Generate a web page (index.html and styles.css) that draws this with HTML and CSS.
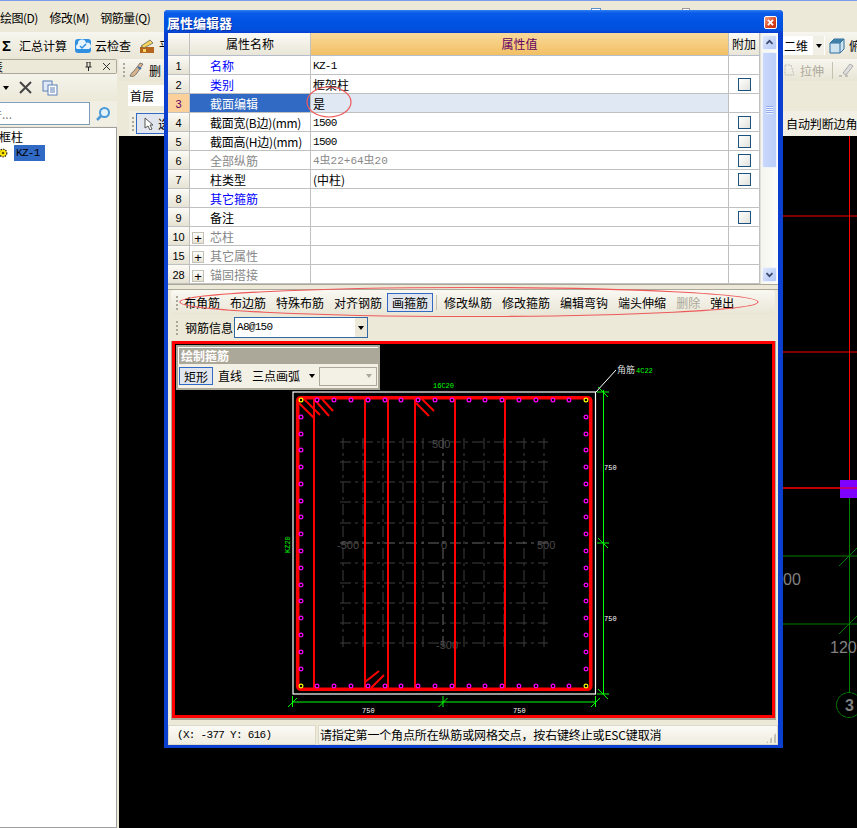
FILE: index.html
```html
<!DOCTYPE html>
<html lang="zh-CN">
<head>
<meta charset="utf-8">
<title>属性编辑器</title>
<link rel="stylesheet" href="styles.css">
</head>
<body>
<div class="app">
  <div class="menubar">
    <span class="menu">绘图(D)</span><span class="menu">修改(M)</span><span class="menu">钢筋量(Q)</span>
    <span class="peek p1"></span><span class="peek p2"></span>
  </div>
  <div class="mainbar">
    <div class="tools">
      <span class="sigma">Σ</span><span class="tl">汇总计算</span>
      <svg class="ic16" viewBox="0 0 16 16"><rect x="0" y="1" width="16" height="14" rx="3" fill="#2f8fe0"/><path d="M2 11a3 3 0 0 1 1-5 4 4 0 0 1 8-1 3 3 0 0 1 3 6z" fill="#e8f4fd"/><path d="M5 8l2 2 4-4" fill="none" stroke="#2f8fe0" stroke-width="1.5"/></svg>
      <span class="tl">云检查</span>
      <svg class="ic16" viewBox="0 0 16 16"><rect x="1" y="9" width="14" height="6" fill="#b5651d"/><path d="M2 8l9-6 3 3-9 5z" fill="#f4d35e" stroke="#555" stroke-width=".7"/><rect x="4" y="11" width="3" height="3" fill="#f4d35e"/></svg>
      <span class="tl">平</span>
    </div>
    <div class="tools">
      <span class="dd">二维</span><span class="ddb"><i class="tri"></i></span>
      <svg class="ic16" viewBox="0 0 16 16"><path d="M1 5l4-4h10v10l-4 4H1z" fill="#cfe2ef" stroke="#2f6f9f"/><path d="M1 5h10v10M11 5l4-4" fill="none" stroke="#2f6f9f"/><path d="M1 5l4-4h10l-4 4z" fill="#3f7fa8"/></svg>
      <span class="tl">俯</span>
    </div>
  </div>
  <div class="work">
    <aside class="side">
      <div class="sidehead">
        <span class="clip">表</span>
        <span class="sideicons"><svg class="ic9" viewBox="0 0 9 9"><path d="M3 0v5M6 0v5M1.5 5h6M4.5 5v4M2.5 0h4" stroke="#222" fill="none"/></svg><svg class="ic9" viewBox="0 0 9 9"><path d="M1 1l7 7M8 1L1 8" stroke="#333" fill="none"/></svg></span>
      </div>
      <div class="sidetools">
        <i class="tri"></i>
        <svg class="ic13" viewBox="0 0 13 13"><path d="M1 1l11 11M12 1L1 12" stroke="#444" stroke-width="2" fill="none"/></svg>
        <svg class="ic16" viewBox="0 0 16 16"><rect x="1" y="1" width="9" height="10" fill="#dfe9f7" stroke="#5b7fb5"/><rect x="6" y="5" width="9" height="10" fill="#fff" stroke="#5b7fb5"/><path d="M8 8h5M8 10h5M8 12h5" stroke="#5b7fb5"/></svg>
      </div>
      <div class="searchrow">
        <div class="search"><span class="clip2">件...</span></div>
        <svg class="ic16 sbtn" viewBox="0 0 16 16"><circle cx="9.5" cy="6.5" r="4.5" fill="#e4f2fb" stroke="#4a9ad8" stroke-width="2"/><path d="M6 10l-4 4" stroke="#4a9ad8" stroke-width="2.5"/></svg>
      </div>
      <div class="tree">
        <div class="node"><span class="clip3">框柱</span></div>
        <div class="node">
          <svg class="gear" viewBox="0 0 10 10"><circle cx="5" cy="5" r="3.8" fill="#ffe600" stroke="#222" stroke-width="1.2" stroke-dasharray="1.5 1"/><circle cx="5" cy="5" r="1.3" fill="#6b5b00"/></svg>
          <span class="sel">KZ-1</span>
        </div>
      </div>
    </aside>
    <div class="stage">
      <div class="rowbar bar2">
        <span class="grip"></span>
        <svg class="ic16" viewBox="0 0 16 16"><path d="M1 14c3 1 5 0 7-3l6-9-3-1-6 8c-2 1-3 3-4 5z" fill="#d9b38c" stroke="#555" stroke-width=".7"/><path d="M9 5l3 2" stroke="#3a6fb0" stroke-width="2"/></svg>
        <span class="tl">删</span>
        <span class="push"></span>
        <svg class="ic13" viewBox="0 0 13 13"><path d="M2 1h6l3 10H2z" fill="none" stroke="#bbb" stroke-dasharray="2 1"/></svg>
        <span class="tl off">拉伸</span><span class="vsep"></span>
        <svg class="ic16" viewBox="0 0 16 16"><path d="M4 11l7-9 3 2-7 9z" fill="#ddd" stroke="#aaa"/><path d="M0 14h3M6 14h3" stroke="#999"/></svg>
      </div>
      <div class="rowbar bar3"><span class="floor">首层</span></div>
      <div class="rowbar bar4">
        <span class="grip"></span>
        <span class="selbtn"><svg class="ic13" viewBox="0 0 13 13"><path d="M3 1v10l3-2 2 4 2-1-2-4h3z" fill="#fff" stroke="#555"/></svg><span class="tl">选</span></span>
        <span class="push"></span>
        <span class="auto">自动判断边角</span>
      </div>
      <svg class="cad" viewBox="119 136 738 692" width="738" height="692">
        <g fill="none">
          <path d="M783 216H857M783 352H857M783 488H857M849.5 136V488" stroke="#f00"/>
          <rect x="840" y="480" width="17" height="18" fill="#7f00ff"/>
          <path d="M783 488H857" stroke="#f00"/>
          <path d="M783 556H857M783 624H857M849.5 498V692M839 566l20-20M839 634l20-20" stroke="#007f00"/>
          <circle cx="849" cy="705" r="12.5" stroke="#007f00" stroke-dasharray="5 .6"/>
        </g>
        <text class="big" x="783" y="585">00</text>
        <text class="big" x="830" y="653">1200</text>
        <text class="big b3" x="845" y="711">3</text>
      </svg>
    </div>
  </div>

  <section class="dialog">
    <header class="dtitle"><span>属性编辑器</span>
      <span class="close"><svg viewBox="0 0 13 13"><path d="M3.5 3.5l6 6M9.5 3.5l-6 6" stroke="#fff" stroke-width="2.2" fill="none"/></svg></span>
    </header>
    <div class="gridwrap">
      <div class="grid">
        <div class="row head"><div class="rn"></div><div class="nm ctr">属性名称</div><div class="val hv">属性值</div><div class="add">附加</div></div>
        <div class="row"><div class="rn">1</div><div class="nm blue">名称</div><div class="val num">KZ-1</div><div class="add"></div></div>
        <div class="row"><div class="rn">2</div><div class="nm blue">类别</div><div class="val">框架柱</div><div class="add"><i class="chk"></i></div></div>
        <div class="row cur"><div class="rn">3</div><div class="nm">截面编辑</div><div class="val">是</div><div class="add"></div></div>
        <div class="row"><div class="rn">4</div><div class="nm nml">截面宽(B边)(mm)</div><div class="val num">1500</div><div class="add"><i class="chk"></i></div></div>
        <div class="row"><div class="rn">5</div><div class="nm nml">截面高(H边)(mm)</div><div class="val num">1500</div><div class="add"><i class="chk"></i></div></div>
        <div class="row"><div class="rn">6</div><div class="nm gray">全部纵筋</div><div class="val num gray">4虫22+64虫20</div><div class="add"><i class="chk"></i></div></div>
        <div class="row"><div class="rn">7</div><div class="nm">柱类型</div><div class="val">(中柱)</div><div class="add"><i class="chk"></i></div></div>
        <div class="row"><div class="rn">8</div><div class="nm blue">其它箍筋</div><div class="val"></div><div class="add"></div></div>
        <div class="row"><div class="rn">9</div><div class="nm">备注</div><div class="val"></div><div class="add"><i class="chk"></i></div></div>
        <div class="row"><div class="rn">10</div><div class="nm gray"><i class="plus">+</i>芯柱</div><div class="val"></div><div class="add"></div></div>
        <div class="row"><div class="rn">15</div><div class="nm gray"><i class="plus">+</i>其它属性</div><div class="val"></div><div class="add"></div></div>
        <div class="row"><div class="rn">28</div><div class="nm gray"><i class="plus">+</i>锚固搭接</div><div class="val"></div><div class="add"></div></div>
      </div>
      <div class="scroll">
        <span class="sb"><svg viewBox="0 0 15 15"><path d="M4 9l3.5-3.5L11 9" fill="none" stroke="#3a4a70" stroke-width="2"/></svg></span>
        <span class="thumb"><i></i></span>
        <span class="sb sbd"><svg viewBox="0 0 15 15"><path d="M4 6l3.5 3.5L11 6" fill="none" stroke="#3a4a70" stroke-width="2"/></svg></span>
      </div>
    </div>
    <div class="split"></div>
    <div class="lower">
      <div class="tbar t1">
        <span class="grip"></span>
        <span class="it">布角筋</span><span class="it">布边筋</span><span class="it">特殊布筋</span><span class="it">对齐钢筋</span><span class="it on">画箍筋</span><span class="vsep"></span><span class="it">修改纵筋</span><span class="it">修改箍筋</span><span class="it">编辑弯钩</span><span class="it">端头伸缩</span><span class="it off">删除</span><span class="it">弹出</span>
      </div>
      <div class="tbar t2">
        <span class="grip"></span>
        <span class="lbl">钢筋信息</span>
        <span class="combo"><span class="cv">A8@150</span><span class="cb"><i class="tri"></i></span></span>
      </div>
      <div class="draw">
        <svg class="plan" viewBox="175 344 597 371" width="597" height="371">
          <path class="gridl" d="M340 442H548M340 462H548M340 482H548M340 502H548M340 523H548M340 563H548M340 583H548M340 603H548M340 623H548M340 643H548M343 438V647M363 438V647M383 438V647M403 438V647M423 438V647M464 438V647M484 438V647M504 438V647M524 438V647M544 438V647"/>
          <path class="gridc" d="M340 543H548M443 438V647"/>
          <text class="gt" x="432" y="448">500</text>
          <text class="gt" x="441" y="549">0</text>
          <text class="gt" x="537" y="549">500</text>
          <text class="gt" x="337" y="549">-500</text>
          <text class="gt" x="436" y="649">-500</text>

          <rect x="293" y="392" width="302.5" height="302" fill="none" stroke="#fff" stroke-width="1.2"/>
          <path class="rebar2" d="M314 398V690M365 398V690M388 398V690M415 398V690M455 398V690M505 398V690"/>
          <path class="rebar2" d="M299 403L314 418M304 399L320 415M314 399L329 416M322 399L333 411M416 403L429 416M422 399L434 411M365 682L379 671M371 688L384 675"/>
          <rect x="297.7" y="397.7" width="293" height="291.6" rx="3" fill="none" stroke="#f00" stroke-width="3.6"/>

          <g class="dots">
            <circle cx="317" cy="400"/><circle cx="334" cy="400"/><circle cx="351" cy="400"/><circle cx="368" cy="400"/><circle cx="385" cy="400"/><circle cx="401" cy="400"/><circle cx="418" cy="400"/><circle cx="435" cy="400"/><circle cx="452" cy="400"/><circle cx="469" cy="400"/><circle cx="485" cy="400"/><circle cx="502" cy="400"/><circle cx="519" cy="400"/><circle cx="536" cy="400"/><circle cx="553" cy="400"/><circle cx="569" cy="400"/>
            <circle cx="317" cy="686"/><circle cx="334" cy="686"/><circle cx="351" cy="686"/><circle cx="368" cy="686"/><circle cx="385" cy="686"/><circle cx="401" cy="686"/><circle cx="418" cy="686"/><circle cx="435" cy="686"/><circle cx="452" cy="686"/><circle cx="469" cy="686"/><circle cx="485" cy="686"/><circle cx="502" cy="686"/><circle cx="519" cy="686"/><circle cx="536" cy="686"/><circle cx="553" cy="686"/><circle cx="569" cy="686"/>
            <circle cx="301" cy="417"/><circle cx="301" cy="434"/><circle cx="301" cy="450"/><circle cx="301" cy="467"/><circle cx="301" cy="484"/><circle cx="301" cy="501"/><circle cx="301" cy="517"/><circle cx="301" cy="534"/><circle cx="301" cy="551"/><circle cx="301" cy="568"/><circle cx="301" cy="585"/><circle cx="301" cy="601"/><circle cx="301" cy="618"/><circle cx="301" cy="635"/><circle cx="301" cy="652"/><circle cx="301" cy="669"/>
            <circle cx="586" cy="417"/><circle cx="586" cy="434"/><circle cx="586" cy="450"/><circle cx="586" cy="467"/><circle cx="586" cy="484"/><circle cx="586" cy="501"/><circle cx="586" cy="517"/><circle cx="586" cy="534"/><circle cx="586" cy="551"/><circle cx="586" cy="568"/><circle cx="586" cy="585"/><circle cx="586" cy="601"/><circle cx="586" cy="618"/><circle cx="586" cy="635"/><circle cx="586" cy="652"/><circle cx="586" cy="669"/>
          </g>
          <g class="dots yel"><circle cx="301" cy="400"/><circle cx="586" cy="400"/><circle cx="301" cy="686"/><circle cx="586" cy="686"/></g>

          <path class="dim" d="M603.5 390V694M597 392H609M597 543H609M597 694H609M292.5 702H595.5M292.5 696V707M443 696V707M595.5 696V707M288 707l9-9M438.5 707l9-9M591 707l9-9M598 538l10 10M598 387l10 10M598 689l10 10"/>
          <path d="M596 392L616 370" stroke="#fff" fill="none"/>
          <text class="wt" x="604" y="470">750</text>
          <text class="wt" x="604" y="621">750</text>
          <text class="wt" x="362" y="713">750</text>
          <text class="wt" x="513" y="713">750</text>
          <text class="gn" x="433" y="388">16C20</text>
          <text class="wt cj" x="617" y="373">角筋</text>
          <text class="gn" x="636" y="373">4C22</text>
          <text class="gn" transform="translate(290 553) rotate(-90)">KZ20</text>
        </svg>
        <div class="palette">
          <div class="ptitle">绘制箍筋</div>
          <div class="pbody">
            <span class="pit on">矩形</span><span class="pit">直线</span><span class="pit">三点画弧</span><i class="tri"></i>
            <span class="pcombo"><i class="tri dis"></i></span>
          </div>
        </div>
      </div>
    </div>
    <footer class="status">
      <div class="s1">(X: -377 Y: 616)</div>
      <div class="s2">请指定第一个角点所在纵筋或网格交点，按右键终止或ESC键取消<span class="resize"></span></div>
    </footer>
  </section>

  <svg class="marks" viewBox="0 0 857 828" width="857" height="828">
    <ellipse cx="329" cy="102" rx="22" ry="15"/>
    <ellipse cx="469" cy="302" rx="289" ry="14.5"/>
  </svg>
</div>
</body>
</html>
```

FILE: styles.css
```css
* { box-sizing: border-box; }
html, body { margin: 0; padding: 0; background: #ece9d8; }
body { width: 857px; height: 828px; overflow: hidden; font: 12px/19px "Noto Sans CJK SC", "Liberation Sans", sans-serif; color: #000; }
i { font-style: normal; }
svg { display: block; flex: none; }

.app { position: relative; width: 857px; height: 828px; overflow: hidden; border-top: 1px solid #7f9ce8; background: #ece9d8; display: flex; flex-direction: column; }

.menubar { height: 31px; display: flex; align-items: center; gap: 11.5px; flex: none; padding-top: 1px; }
.menu { letter-spacing: -.5px; white-space: nowrap; }
.peek { align-self: flex-start; margin-top: 6px; width: 10px; height: 3px; flex: none; border: 1px solid #5b8fd0; border-bottom: 0; background: #fff; }
.p1 { margin-left: 429px; }
.p2 { margin-left: 70px; width: 8px; border-color: #999; }

.mainbar { height: 27px; flex: none; display: flex; justify-content: space-between; background: linear-gradient(#f7f6ef, #e9e6d6); }
.tools { display: flex; align-items: center; gap: 4px; padding-left: 2px; }
.sigma { font-weight: 700; font-size: 15px; font-family: "Liberation Sans", sans-serif; width: 13px; }
.tl { white-space: nowrap; }
.tl + .ic16 { margin-left: 4px; }
.off { color: #aca899; }
.ic16 { width: 16px; height: 16px; }
.ic13 { width: 13px; height: 13px; }
.ic9 { width: 9px; height: 9px; }
.tri { display: inline-block; width: 0; height: 0; flex: none; border: 3.5px solid transparent; border-top: 4px solid #000; border-bottom: 0; }
.tri.dis { border-top-color: #aca899; }
.dd { background: #fff; width: 30px; margin-right: -4px; padding-left: 1px; height: 19px; white-space: nowrap; flex: none; }
.ddb { width: 12px; height: 19px; flex: none; background: #f0efe6; display: flex; align-items: center; justify-content: center; border-right: 1px solid #fff; }
.mainbar .tools:last-child { width: 74px; padding: 0; overflow: hidden; flex: none; }

.work { flex: 1; display: flex; min-height: 0; }

.side { width: 119px; flex: none; display: flex; flex-direction: column; padding-right: 2px; overflow: hidden; }
.sidehead { height: 15px; flex: none; border: 1px solid #aca899; border-left: 0; border-radius: 0 2px 2px 0; display: flex; justify-content: space-between; align-items: center; background: #ece9d8; overflow: hidden; }
.clip { margin-left: -9px; }
.sideicons { display: flex; align-items: center; gap: 9px; padding-right: 5px; }
.sidetools { height: 27px; flex: none; display: flex; align-items: center; gap: 10px; padding-left: 3px; background: linear-gradient(#f5f4ec, #ece9d8); }
.searchrow { height: 25px; flex: none; display: flex; align-items: center; gap: 5px; background: #f1efe3; }
.search { width: 90px; height: 23px; background: #fff; border: 1px solid #7f9db9; border-left: 0; color: #888; overflow: hidden; padding-top: 1px; }
.clip2 { margin-left: -10px; display: inline-block; }
.sbtn { width: 16px; height: 16px; }
.tree { flex: 1; background: #fff; border: 1px solid #a0a0a0; border-left: 0; margin-top: 1px; }
.node { height: 16px; display: flex; align-items: center; line-height: 16px; }
.node:first-child { margin-top: 1px; }
.clip3 { margin-left: -1px; }
.gear { width: 10px; height: 10px; margin-left: -2px; margin-right: 6px; flex: none; }
.sel { background: #316ac5; width: 31px; height: 16px; font: 11px/16px "Liberation Mono", monospace; letter-spacing: -.7px; padding-left: 2px; }

.stage { flex: 1; min-width: 0; display: flex; flex-direction: column; }
.rowbar { display: flex; align-items: center; flex: none; }
.bar2 { height: 22px; gap: 4px; padding: 0 2px 0 4px; background: linear-gradient(#f7f6ef, #e8e5d5); }
.bar3 { height: 28px; margin-top: 2px; padding: 2px 0 0 9px; align-items: flex-start; background: #ece9d8; }
.floor { background: #fff; width: 37px; height: 21px; line-height: 21px; padding-left: 2px; }
.bar4 { height: 25px; margin-left: 10px; padding-left: 3px; background: #f1efe3; }
.grip { width: 2px; height: 14px; margin-right: 2px; flex: none; background: repeating-linear-gradient(#aca899 0 2px, transparent 2px 4px); }
.bar2 .grip { margin-right: 0; }
.selbtn { display: flex; align-items: center; gap: 3px; height: 21px; padding: 0 2px 0 5px; background: #e1e6ee; border: 1px solid #316ac5; }
.push { flex: 1; }
.vsep { width: 1px; height: 17px; background: #c5c2b2; flex: none; margin: 0 2px; }
.bar2 .tl.off { margin-right: 2px; }
.auto { white-space: nowrap; width: 71px; flex: none; letter-spacing: -.1px; }
.cad { background: #000; flex: none; }
.big { font: 16px "Liberation Sans", sans-serif; fill: #808080; }
.b3 { font-weight: 700; }

.dialog { position: absolute; left: 164px; top: 9px; width: 619px; height: 738px; background: #ece9d8; display: flex; flex-direction: column; border: solid #0a3fd0; border-width: 0 5px 3px 4px; border-top-left-radius: 4px; border-top-right-radius: 4px; }
.dtitle { height: 23px; flex: none; margin: 0 -5px 0 -4px; padding: 1px 6px 0 3px; display: flex; align-items: center; justify-content: space-between; background: linear-gradient(#2f80f5 0, #0a5be8 3px, #0054e3 12px, #0250dc 20px, #0a3fd0 100%); border-radius: 4px 4px 0 0; color: #fff; font-weight: 700; font-size: 13px; text-shadow: 1px 1px 0 #0a2f9f; }
.close { width: 13px; height: 13px; background: linear-gradient(135deg, #f2a488, #d9431c 60%, #c2300e); border: 1px solid #fff; border-radius: 2px; display: block; }
.close svg { width: 11px; height: 11px; }

.gridwrap { height: 251px; flex: none; display: flex; background: #fff; }
.grid { width: 592px; flex: none; overflow: hidden; background: #fff; }
.row { display: grid; grid-template-columns: 22px 121px 418px 31px; height: 19px; border-bottom: 1px solid #c0c0c0; line-height: 20px; }
.row > div { border-right: 1px solid #c0c0c0; white-space: nowrap; overflow: hidden; }
.rn { text-align: center; background: linear-gradient(#fbfaf5, #e6e3d4); font: 11px/20px "Liberation Sans", sans-serif; }
.nm { padding-left: 20px; }
.nml { letter-spacing: -.3px; }
.val { padding-left: 2px; }
.num { font: 11px/20px "Liberation Mono", "Noto Sans CJK SC", monospace; letter-spacing: -.7px; }
.num.gray { letter-spacing: 0; }
.blue { color: #00f; }
.gray { color: #888; }
.add { display: flex; align-items: center; justify-content: center; }
.chk { width: 13px; height: 13px; border: 1px solid #1c5180; background: linear-gradient(135deg, #fff, #e2e2dc); display: block; }
.row.head { height: 23px; line-height: 22px; border-bottom-color: #b5bccb; }
.head .rn { background: linear-gradient(#fbfaf5, #e6e3d4); }
.ctr { padding-left: 0; text-align: center; background: linear-gradient(#fbfaf5, #e9e6d8); }
.hv { text-align: center; padding: 0; color: #660066; background: linear-gradient(#f9d99a, #f2c064); }
.head .add { background: linear-gradient(#fbfaf5, #e9e6d8); }
.cur .rn { background: #fbd09a; color: #660066; }
.cur .nm { background: #316ac5; color: #fff; }
.cur .val { background: #e0e8f3; }
.plus { display: inline-block; width: 12px; height: 12px; text-align: center; font: 13px/11px "Liberation Sans", sans-serif; color: #000; border: 1px solid #c4c2b5; background: linear-gradient(#fff, #e6e3d4); margin: 0 6px 0 -18px; vertical-align: -1px; }

.scroll { width: 18px; flex: none; display: flex; flex-direction: column; align-items: center; padding: 2px 0; background: linear-gradient(90deg, #f5f5ee, #fdfdfa); border-left: 1px solid #e0e0da; }
.sb { width: 15px; height: 15px; flex: none; border: 1px solid #eef3fd; border-radius: 2px; background: linear-gradient(135deg, #dfe8fb, #b4c8f6); }
.sb svg { width: 13px; height: 13px; }
.sbd { margin-top: auto; }
.thumb { width: 15px; height: 116px; margin-top: 2px; border: 1px solid #eef3fd; border-radius: 2px; background: linear-gradient(90deg, #c9d8fb, #bccff9); display: flex; align-items: center; justify-content: center; }
.thumb i { display: block; width: 7px; height: 8px; background: repeating-linear-gradient(#8faaf0 0 1px, #eef3fd 1px 2px); }

.split { height: 5px; flex: none; background: #ece9d8; border-top: 1px solid #aca899; }
.lower { height: 430px; flex: none; padding: 0 2px 0 3px; display: flex; flex-direction: column; border-top: 1px solid #aca899; }
.tbar { display: flex; align-items: center; flex: none; }
.t1 { height: 25px; padding-left: 5px; margin-right: 1px; background: linear-gradient(#f9f8f2, #e9e6d6); border-radius: 3px; }
.t1 .grip { margin-right: 1px; }
.it { padding: 0 5px; height: 19px; line-height: 19px; white-space: nowrap; flex: none; }
.it.on { background: #e1e6ee; border: 1px solid #316ac5; padding: 0 4px; width: 46px; line-height: 17px; }
.t1 .vsep { margin: 0 2px 0 3px; height: 15px; }
.t2 { height: 23px; margin-top: 1px; padding-left: 5px; }
.t2 .grip { margin-right: 7px; }
.lbl { width: 49px; }
.combo { width: 134px; height: 21px; background: #fff; border: 1px solid #3169a6; display: flex; justify-content: space-between; }
.cv { font: 11px/19px "Liberation Mono", monospace; letter-spacing: -.7px; padding-left: 2px; }
.cb { width: 12px; background: #ece9d8; display: flex; align-items: center; justify-content: center; }
.draw { position: relative; width: 603px; height: 377px; margin: 2px 0 0 1px; flex: none; border: 3px solid #f00; background: #000; box-shadow: 0 1px 0 1px #aca899; }
.plan { background: #000; }
.gridl, .gridc { fill: none; stroke: #3f3f3f; stroke-dasharray: 11 4 3 4; }
.gridc { stroke: #666; }
.gt { font: 11px "Liberation Sans", sans-serif; fill: #4a4a4a; }
.rebar2 { stroke: #f00; stroke-width: 2; fill: none; }
.dots circle { r: 1.9px; fill: #000; stroke: #f0f; stroke-width: 1.2; }
.dots.yel circle { stroke: #ff0; }
.dim { stroke: #0f0; fill: none; }
.wt { font: 7px "Liberation Mono", monospace; fill: #fff; }
.wt.cj { font: 9px "Noto Sans CJK SC", sans-serif; fill: #ddd; }
.gn { font: 7px "Liberation Mono", monospace; fill: #0f0; }

.palette { position: absolute; left: 1px; top: 1px; width: 204px; height: 45px; border: 2px solid #aca899; background: #ece9d8; }
.ptitle { height: 17px; background: #aca899; color: #fff; font-weight: 700; line-height: 16px; padding-left: 2px; border-top: 1px solid #fff; border-left: 1px solid #fff; }
.pbody { height: 24px; display: flex; align-items: center; padding: 0 2px 0 1px; background: #f3f1e6; }
.pit { padding: 0 5px; height: 18px; line-height: 17px; white-space: nowrap; flex: none; }
.pit.on { background: #e1e6ee; border: 1px solid #316ac5; padding: 0 4px; }
.pbody .tri { margin-left: 4px; }
.pcombo { width: 58px; height: 19px; margin-left: 4px; border: 1px solid #aca899; background: #f3f1e6; display: flex; align-items: center; justify-content: flex-end; padding-right: 4px; flex: none; }
.pcombo .tri { margin: 0; }

.status { height: 20px; flex: none; margin-top: 6px; display: flex; gap: 2px; background: #ece9d8; }
.s1, .s2 { height: 20px; background: linear-gradient(#fbfaf5, #efece0); border: 1px solid #dcd9c8; line-height: 18px; }
.s1 { width: 148px; padding-left: 8px; font: 11px/18px "Liberation Mono", monospace; letter-spacing: -.7px; white-space: pre; }
.s2 { flex: 1; padding-left: 1px; position: relative; white-space: nowrap; letter-spacing: -.15px; }
.resize { position: absolute; right: 1px; bottom: 1px; width: 10px; height: 10px; background: repeating-linear-gradient(90deg, #c5c2b2 0 2px, transparent 2px 4px); clip-path: polygon(100% 0, 100% 100%, 0 100%); }

.marks { position: absolute; left: 0; top: -1px; pointer-events: none; }
.marks ellipse { fill: none; stroke: #ee5a5a; stroke-width: 1.2; }
```
